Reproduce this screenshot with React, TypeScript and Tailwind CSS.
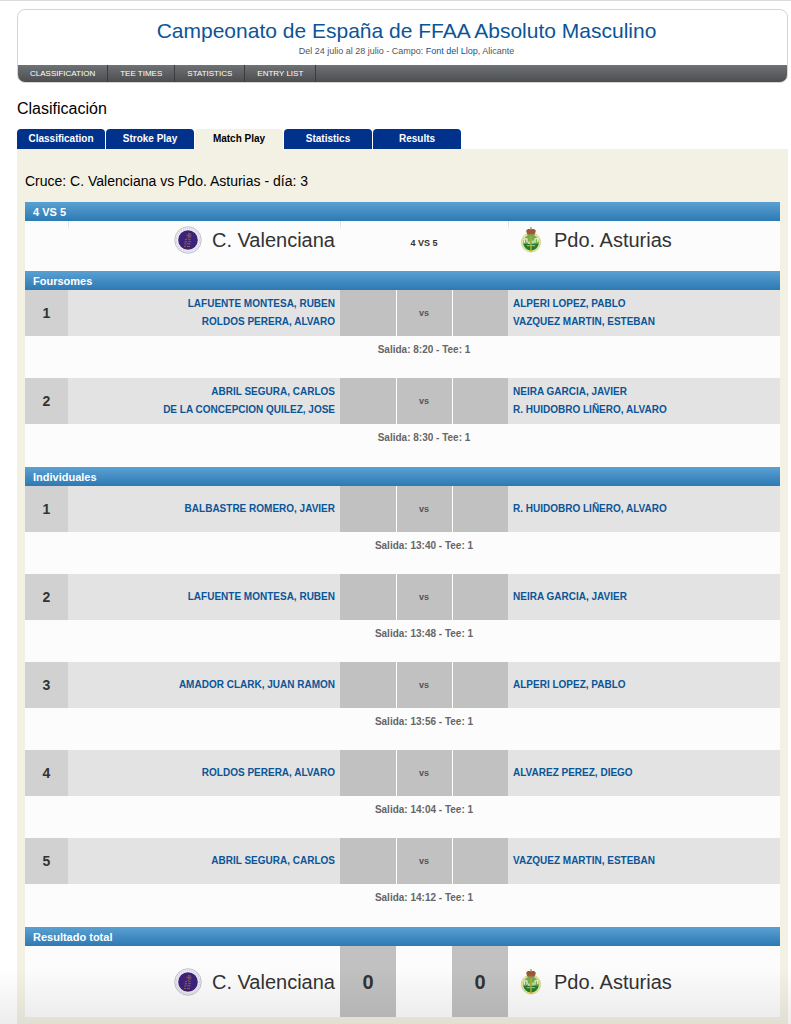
import React from "react";
import clsx from "clsx";

type Match = {
  order: number;
  home: string[];
  away: string[];
  start: string;
};

const navItems = ["CLASSIFICATION", "TEE TIMES", "STATISTICS", "ENTRY LIST"];

const tabs = ["Classification", "Stroke Play", "Match Play", "Statistics", "Results"];

const foursomes: Match[] = [
  {
    order: 1,
    home: ["LAFUENTE MONTESA, RUBEN", "ROLDOS PERERA, ALVARO"],
    away: ["ALPERI LOPEZ, PABLO", "VAZQUEZ MARTIN, ESTEBAN"],
    start: "8:20",
  },
  {
    order: 2,
    home: ["ABRIL SEGURA, CARLOS", "DE LA CONCEPCION QUILEZ, JOSE"],
    away: ["NEIRA GARCIA, JAVIER", "R. HUIDOBRO LIÑERO, ALVARO"],
    start: "8:30",
  },
];

const singles: Match[] = [
  { order: 1, home: ["BALBASTRE ROMERO, JAVIER"], away: ["R. HUIDOBRO LIÑERO, ALVARO"], start: "13:40" },
  { order: 2, home: ["LAFUENTE MONTESA, RUBEN"], away: ["NEIRA GARCIA, JAVIER"], start: "13:48" },
  { order: 3, home: ["AMADOR CLARK, JUAN RAMON"], away: ["ALPERI LOPEZ, PABLO"], start: "13:56" },
  { order: 4, home: ["ROLDOS PERERA, ALVARO"], away: ["ALVAREZ PEREZ, DIEGO"], start: "14:04" },
  { order: 5, home: ["ABRIL SEGURA, CARLOS"], away: ["VAZQUEZ MARTIN, ESTEBAN"], start: "14:12" },
];

const ValencianaCrest = () => (
  <svg viewBox="0 0 28 28" className="size-7 shrink-0" aria-hidden="true">
    <circle cx="14" cy="14" r="13.3" fill="#f1f0f6" stroke="#c3c0d2" strokeWidth="1" />
    <circle cx="14" cy="14" r="11.5" fill="none" stroke="#d3d0df" strokeWidth="1.6" strokeDasharray="1.2 1" />
    <circle cx="14" cy="14" r="9.8" fill="#3d2279" />
    <g fill="none" stroke="#94644f" strokeWidth="1">
      <path d="M12.5 9.2h5M14 7.8h2.6M13.6 10.6l3.6.6M15.4 11.4l-1.6 1.4" />
      <path d="M11 13.8l2-.8M14.6 13.6h2M10.6 15.8h2.6M14.4 15.6h2.4M10.2 18h2.2M13.2 17.8h3.4M10 20.4h2M13 20.4h3" />
    </g>
  </svg>
);

const AsturiasCrest = () => (
  <svg viewBox="0 0 22 28" className="h-7 w-[22px] shrink-0" aria-hidden="true">
    <circle cx="11" cy="16.4" r="9.6" fill="#e4e58c" stroke="#d4d9a0" strokeWidth="1" />
    <circle cx="11" cy="16.4" r="7.8" fill="#74ad49" />
    <path d="M3.3 17.8h15.4a7.8 7.8 0 0 1-15.4 0z" fill="#237b38" />
    <path
      d="M4.4 13v3.8M7 12.4v4M4.2 12.8h3M15 12.6v4.2M17.6 13v3M15 12.6h2.8M9 15.5v2.5M13 14.5v3"
      stroke="#e6eee0"
      strokeWidth="1.3"
      fill="none"
    />
    <path d="M11 10.5v14M6.8 19.6h8.4M9.4 24.8h3.2" stroke="#b9b32d" strokeWidth="1.4" fill="none" />
    <path d="M6.2 5.2C6.6 3 9 2.8 11 3.4c2-.6 4.4-.4 4.8 1.8L14.8 8H7.2z" fill="#9c5934" />
    <path d="M11 1v3M7.4 8.4h7.2" stroke="#91805a" strokeWidth="1.2" />
  </svg>
);

const SectionBar: React.FC<{ title: string }> = ({ title }) => (
  <tr className="h-[19px] bg-linear-to-b from-[#5aa0d2] to-[#2c7ab4]">
    <th colSpan={6} scope="colgroup" className="px-2 text-left text-[11px] leading-4 text-white">
      {title}
    </th>
  </tr>
);

const Team: React.FC<{ name: string; crest: React.ReactNode; home?: boolean }> = ({ name, crest, home }) => (
  <div
    className={clsx(
      "flex items-center text-xl leading-7 text-[#333]",
      home ? "justify-end gap-2.5 pr-[5px]" : "gap-3 pl-3"
    )}
  >
    {crest}
    <span>{name}</span>
  </div>
);

const Players: React.FC<{ names: string[] }> = ({ names }) => (
  <ul>
    {names.map((name) => (
      <li key={name}>
        <a href="#player" className="hover:underline">
          {name}
        </a>
      </li>
    ))}
  </ul>
);

const MatchRows: React.FC<{ match: Match; last: boolean }> = ({ match, last }) => (
  <>
    <tr className="h-[46px] bg-[#e3e3e3] text-[10px] leading-[18px] font-bold text-[#0b5597]">
      <th scope="row" className="bg-[#d1d1d1] text-sm text-[#333]">
        {match.order}
      </th>
      <td className="pr-[5px] text-right">
        <Players names={match.home} />
      </td>
      <td className="bg-[#c1c1c1]" />
      <td className="border-l border-white bg-[#c1c1c1] text-center text-[9px] text-[#555]">vs</td>
      <td className="border-l border-white bg-[#c1c1c1]" />
      <td className="pl-[5px]">
        <Players names={match.away} />
      </td>
    </tr>
    <tr className={last ? "h-[43px]" : "h-[42px]"}>
      <td />
      <td colSpan={5} className="pt-1.5 text-center align-top text-[10px] leading-4 font-bold text-[#666]">
        Salida: {match.start} - Tee: 1
      </td>
    </tr>
  </>
);

const Section: React.FC<{ title: string; matches: Match[] }> = ({ title, matches }) => (
  <tbody>
    <SectionBar title={title} />
    {matches.map((match, i) => (
      <MatchRows key={match.order} match={match} last={i === matches.length - 1} />
    ))}
  </tbody>
);

// short light tick between the columns, right under the first bar
const tick = "bg-linear-to-b from-[#cfe2f1] to-[#e9f1f8] bg-[length:1px_8px] bg-no-repeat";

const Header = () => (
  <header className="overflow-hidden rounded-lg border border-[#d5d5d5] bg-white">
    <div className="pt-2 pb-1.5 pl-2 text-center">
      <h1 className="text-[21px] leading-[26px] text-[#0b5597]">Campeonato de España de FFAA Absoluto Masculino</h1>
      <p className="text-[9px] leading-[15px] text-[#555]">
        Del 24 julio al 28 julio - Campo:{" "}
        <a href="#course" className="text-[#0b5597]">
          Font del Llop
        </a>
        , Alicante
      </p>
    </div>
    <nav className="flex h-[17px] bg-linear-to-b from-[#6f7376] to-[#4d4d4e] text-[8px] leading-[17px] text-white">
      {navItems.map((item) => (
        <a key={item} href="#nav" className="border-r border-[#3c3c3d] px-3">
          {item}
        </a>
      ))}
    </nav>
  </header>
);

const Tabs = () => (
  <div role="tablist" className="flex gap-px">
    {tabs.map((tab) => {
      const active = tab === "Match Play";
      return (
        <button
          key={tab}
          type="button"
          role="tab"
          aria-selected={active}
          className={clsx(
            "h-5 w-[88px] rounded-t-[4px] text-[10px] leading-5 font-bold",
            active ? "bg-[#f3f0e4] text-black" : "bg-[#00328c] text-white"
          )}
        >
          {tab}
        </button>
      );
    })}
  </div>
);

const App = () => {
  return (
    <div className="border-t border-[#dcdcdc] bg-white pt-2 pr-[3px] pl-[17px] font-['Liberation_Sans',Arial,sans-serif]">
      <Header />
      <h2 className="pt-4 pb-2.5 text-base leading-5 text-black">Clasificación</h2>
      <Tabs />
      <main className="bg-[#f3f0e4] px-2 pt-[22px] pb-2">
        <h3 className="pb-[11px] text-sm leading-5 text-black">Cruce: C. Valenciana vs Pdo. Asturias - día: 3</h3>
        <table className="w-full table-fixed border-collapse bg-[#fcfcfc]">
          <colgroup>
            <col className="w-[43px]" />
            <col />
            <col className="w-14" />
            <col className="w-14" />
            <col className="w-14" />
            <col />
          </colgroup>
          <tbody>
            <SectionBar title="4 VS 5" />
            <tr className="h-[50px]">
              <td />
              <td className={clsx("pb-3", tick)}>
                <Team home name="C. Valenciana" crest={<ValencianaCrest />} />
              </td>
              <td colSpan={3} className={clsx("pb-1 text-center text-[9px] font-bold text-[#333]", tick)}>
                4 VS 5
              </td>
              <td className={clsx("pb-3", tick)}>
                <Team name="Pdo. Asturias" crest={<AsturiasCrest />} />
              </td>
            </tr>
          </tbody>
          <Section title="Foursomes" matches={foursomes} />
          <Section title="Individuales" matches={singles} />
          <tbody>
            <SectionBar title="Resultado total" />
            <tr className="h-[71px] text-center text-xl font-bold text-[#333]">
              <td />
              <td className="font-normal">
                <Team home name="C. Valenciana" crest={<ValencianaCrest />} />
              </td>
              <td className="bg-[#c1c1c1]">0</td>
              <td />
              <td className="bg-[#c1c1c1]">0</td>
              <td className="font-normal">
                <Team name="Pdo. Asturias" crest={<AsturiasCrest />} />
              </td>
            </tr>
          </tbody>
        </table>
      </main>
      <div className="pointer-events-none fixed inset-x-0 bottom-0 h-14 bg-linear-to-b from-transparent to-black/7" />
    </div>
  );
};

export default App;
